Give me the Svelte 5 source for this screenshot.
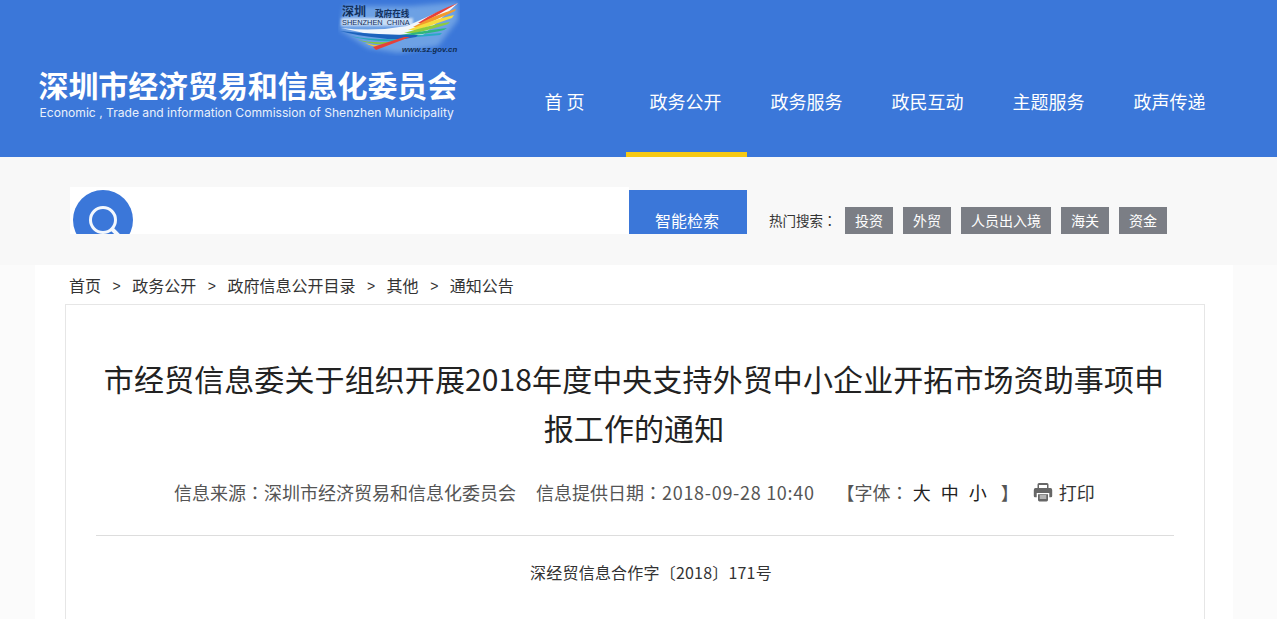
<script>
  const nav = [
    { label: '首 页' },
    { label: '政务公开', active: true },
    { label: '政务服务' },
    { label: '政民互动' },
    { label: '主题服务' },
    { label: '政声传递' }
  ];
  const tags = ['投资', '外贸', '人员出入境', '海关', '资金'];
  const crumbs = ['首页', '政务公开', '政府信息公开目录', '其他', '通知公告'];
</script>

<div class="page">
  <header class="header">
    <div class="brand">
      <svg class="emblem" viewBox="0 0 122 56" width="122" height="56" aria-hidden="true">
        <defs>
          <filter id="glow" x="-20%" y="-20%" width="140%" height="140%"><feGaussianBlur stdDeviation="2.5" /></filter>
          <filter id="soft" x="-10%" y="-30%" width="120%" height="160%"><feGaussianBlur stdDeviation="1" /></filter>
        </defs>
        <path d="M2 30 L6 6 L74 6 L120 2 L120 20 L100 46 L60 53 L30 48Z" fill="#8fbdec" opacity=".6" filter="url(#glow)" />
        <path d="M3 28 Q36 32 69 26 L120 3 L84 36 L40 36Z" fill="#f2f7fc" />
        <path d="M120 3 Q98 11 80 23 L85 23 Q103 13 120 3Z" fill="#e8403a" />
        <path d="M118 9 Q96 15 75 27 L82 27 Q102 18 117 11Z" fill="#f39a2c" />
        <path d="M116 15 Q94 20 70 30 L80 30 Q100 23 114 18Z" fill="#f6dc3e" />
        <path d="M112 22 Q92 25 66 33 L78 33 Q98 28 110 24Z" fill="#8ecb3e" />
        <path d="M109 28 Q90 30 62 35 L76 35 Q94 33 106 30Z" fill="#2eb57f" />
        <path d="M104 33 Q88 34 70 36 L78 37 Q92 36 102 35Z" fill="#28a9c4" />
        <path d="M2 31 Q40 35 80 35 L78 37 Q60 41 42 38 Q20 36 2 31Z" fill="#1c63bd" />
        <path d="M12 36 Q34 40 64 39 L56 41 Q32 42 12 36Z" fill="#27a8bb" />
        <path d="M20 40 Q38 44 58 41 L50 44 Q34 45 20 40Z" fill="#86c63e" />
        <path d="M27 43 Q40 47 52 45 L44 47 Q36 48 27 43Z" fill="#f4c83a" />
        <path d="M38 50 L72 37 L66 37 L35 47Z" fill="#e5403a" />
        <rect x="3" y="18" width="72" height="8" fill="#e6f1fc" opacity=".75" filter="url(#soft)" />
        <text x="4" y="24.6" class="em-sz">SHENZHEN&#160;&#160;CHINA</text>
        <text x="4" y="15.5" class="em-cn">深圳</text>
        <text x="37" y="16.5" class="em-cn2">政府在线</text>
        <text x="64" y="51.5" class="em-url">www.sz.gov.cn</text>
      </svg>
      <div class="title">深圳市经济贸易和信息化委员会</div>
      <div class="subtitle">Economic , Trade and information Commission of Shenzhen Municipality</div>
    </div>
    <nav class="nav">
      {#each nav as item}
        <a class="nav-item" class:active={item.active} href="#top">{item.label}</a>
      {/each}
    </nav>
  </header>

  <section class="search-band">
    <div class="search-box">
      <div class="search-input">
        <div class="search-icon">
          <svg viewBox="0 0 60 44" width="60" height="44" aria-hidden="true">
            <circle cx="30" cy="30" r="12.5" fill="none" stroke="#f4f8fd" stroke-width="3" />
            <path d="M39 39 L46 46" stroke="#f4f8fd" stroke-width="4" />
          </svg>
        </div>
      </div>
      <button class="search-btn">智能检索</button>
    </div>
    <div class="hot">
      <span class="hot-label">热门搜索<span class="colon">：</span></span>
      {#each tags as t}
        <span class="tag">{t}</span>
      {/each}
    </div>
  </section>

  <main class="main">
    <div class="crumbs">
      {#each crumbs as c, i}
        {#if i > 0}<span class="sep">&gt;</span>{/if}
        <span>{c}</span>
      {/each}
    </div>
    <article class="card">
      <h1 class="doc-title">市经贸信息委关于组织开展2018年度中央支持外贸中小企业开拓市场资助事项申报工作的通知</h1>
      <div class="meta">
        <span>信息来源<span class="colon">：</span>深圳市经济贸易和信息化委员会</span>
        <span class="date">信息提供日期<span class="colon">：</span><span class="num">2018-09-28 10:40</span></span>
        <span class="font-sel">【字体<span class="colon">：</span> <b>大</b><b>中</b><b>小</b> 】</span>
        <span class="print">
          <svg viewBox="0 0 20 20" width="20" height="20" aria-hidden="true">
            <path d="M4.5 6V2.6Q4.5 1 6 1H14Q15.5 1 15.5 2.6V6H14V3H6V6Z" fill="#666" />
            <path d="M2.5 6H17.5Q19.2 6 19.2 8V14Q19.2 15.2 18 15.2H16.3V11H3.7V15.2H2Q.8 15.2 .8 14V8Q.8 6 2.5 6Z" fill="#666" />
            <path d="M5 12.3H15V18Q15 19.4 13.6 19.4H6.4Q5 19.4 5 18Z" fill="#666" />
            <path d="M6.7 14H13.3M6.7 16H13.3" stroke="#fff" stroke-width="1" />
          </svg>
          打印
        </span>
      </div>
      <div class="doc-no">深经贸信息合作字〔2018〕171号</div>
    </article>
  </main>
</div>

<style>
  :global(body) {
    margin: 0;
    background: #fbfbfb;
    font-family: "Liberation Sans", "Noto Sans CJK SC", sans-serif;
  }
  .page {
    height: 619px;
    overflow: hidden;
  }
  .header {
    height: 157px;
    background: #3b77d9;
    display: flex;
    position: relative;
  }
  .brand {
    width: 505px;
    flex: none;
    padding: 68px 0 0 38.5px;
    box-sizing: border-box;
    color: #fff;
  }
  .emblem {
    position: absolute;
    left: 338px;
    top: 0;
  }
  .em-sz { font: 400 7.4px "Liberation Sans", sans-serif; fill: #16305a; }
  .em-cn { font: 700 12px "Noto Sans CJK SC", sans-serif; fill: #12305c; }
  .em-cn2 { font: 700 8.6px "Noto Sans CJK SC", sans-serif; fill: #12305c; }
  .em-url { font: italic 700 7.8px "Liberation Sans", sans-serif; fill: #0f2c52; }
  .title {
    font: 700 30px/33px "Noto Sans CJK SC", sans-serif;
    letter-spacing: -.1px;
    white-space: nowrap;
    width: 420px;
  }
  .subtitle {
    font: 12.1px/15px Inter, sans-serif;
    margin-top: 4px;
    margin-left: 1px;
    white-space: nowrap;
    color: #e9f0fb;
  }
  .nav {
    display: flex;
    align-items: stretch;
  }
  .nav-item {
    width: 121px;
    height: 157px;
    box-sizing: border-box;
    padding: 88px 2px 0 0;
    text-align: center;
    color: #fff;
    font: 18px/27px "Noto Sans CJK SC", sans-serif;
    text-decoration: none;
  }
  .nav-item.active {
    border-bottom: 5px solid #f7c913;
  }
  .search-band {
    height: 108px;
    box-sizing: border-box;
    padding: 30px 0 0 70px;
    display: flex;
    background: #f8f8f8;
  }
  .search-box {
    display: flex;
    width: 677px;
    height: 47px;
  }
  .search-input {
    width: 559px;
    height: 47px;
    background: #fff;
    overflow: hidden;
    flex: none;
  }
  .search-icon {
    width: 60px;
    height: 60px;
    border-radius: 50%;
    background: #3b77d9;
    margin: 3px 0 0 3px;
  }
  .search-icon svg { display: block; }
  .search-btn {
    width: 118px;
    height: 44px;
    margin-top: 3px;
    border: 0;
    padding: 16px 2px 0 0;
    background: #3b77d9;
    color: #fff;
    font: 16px/24px "Noto Sans CJK SC", sans-serif;
  }
  .hot {
    margin-left: 22px;
    padding-top: 20px;
    display: flex;
    height: 27px;
    font: 14px/27px "Noto Sans CJK SC", sans-serif;
    color: #333;
  }
  .hot-label { width: 76px; white-space: nowrap; font-size: 13.5px; }
  .colon { font-family: "Noto Sans CJK TC", sans-serif; }
  .tag {
    background: #7b7e85;
    color: #fff;
    padding: 0 10px;
    margin-right: 10px;
    font-size: 14px;
  }
  .main {
    margin: 0 44px 0 35px;
    height: 354px;
    background: #fff;
    padding: 0 28px 0 30px;
  }
  .crumbs {
    display: flex;
    height: 39px;
    padding: 1px 0 0 4px;
    box-sizing: border-box;
    align-items: center;
    font: 16px/22px "Noto Sans CJK SC", sans-serif;
    color: #333;
  }
  .sep {
    font: 14px "Liberation Sans", sans-serif;
    margin: 2px 11.5px 0 11.5px;
  }
  .card {
    border: 1px solid #e6e6e6;
    height: 400px;
    box-sizing: border-box;
    padding: 0 30px;
  }
  .doc-title {
    margin: 49px 2px 0 0;
    font: 400 30px/49px "Noto Sans CJK SC", sans-serif;
    letter-spacing: .1px;
    text-align: center;
    color: #222;
  }
  .meta {
    margin-top: 25px;
    height: 58px;
    padding-left: 78px;
    display: flex;
    font: 18px/30px "Noto Sans CJK SC", sans-serif;
    color: #555;
    border-bottom: 1px solid #ddd;
    white-space: nowrap;
  }
  .date { margin-left: 20px; }
  .num { letter-spacing: .7px; }
  .font-sel { margin-left: 22px; }
  .font-sel b {
    font-weight: 400;
    color: #222;
    margin-right: 10px;
  }
  .print {
    margin-left: 14px;
    color: #333;
    display: flex;
    align-items: center;
    gap: 6px;
    height: 30px;
  }
  .doc-no {
    margin-top: 24px;
    text-align: center;
    text-indent: 32px;
    font: 16px/24px "Noto Sans CJK SC", sans-serif;
    letter-spacing: .2px;
    color: #333;
  }
</style>
